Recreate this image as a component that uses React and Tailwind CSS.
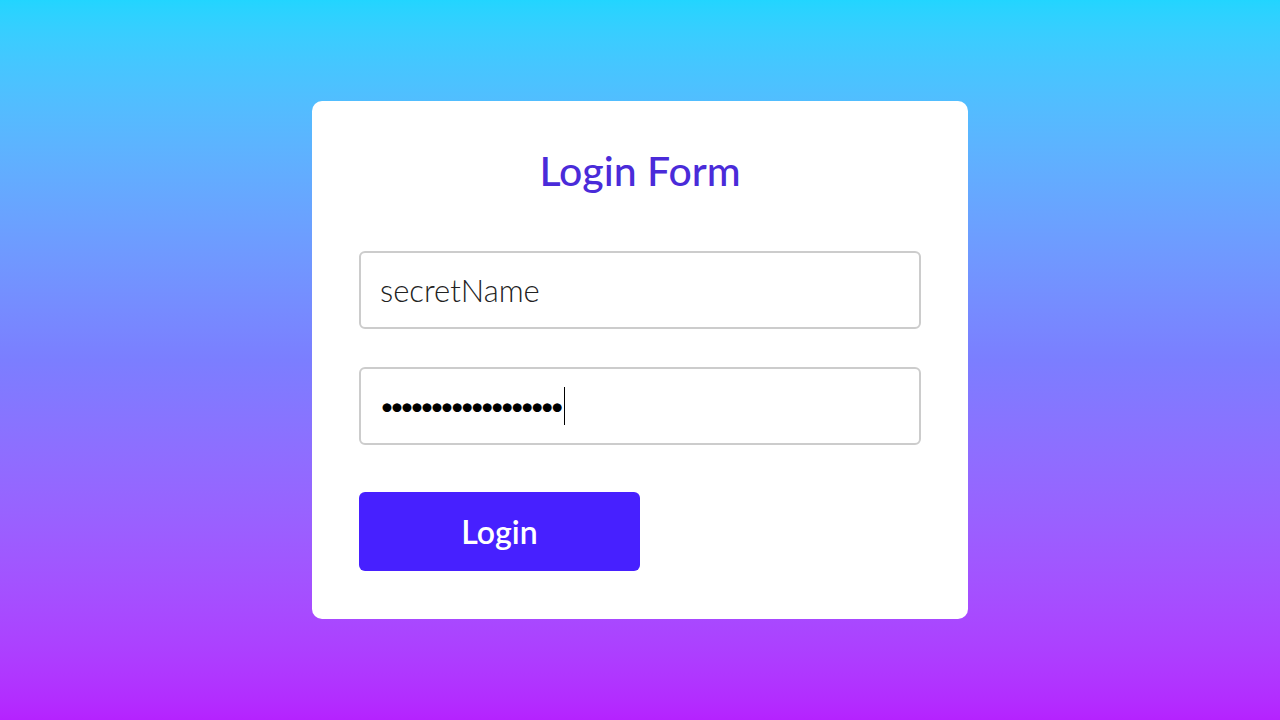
import React from 'react';

const App = () => {
  return (
    <div
      className="w-full h-[720px] flex items-center justify-center bg-gradient-to-b from-[#22d5ff] via-[#7b7eff] to-[#b522ff]"
      style={{ fontFamily: 'Lato, "Noto Sans", sans-serif' }}
    >
      <div className="w-[656px] h-[518px] bg-white rounded-[10px] px-[47px] pt-[48px] flex flex-col">
        <h1 className="text-center text-[41px] leading-[44px] text-[#4a2bd9] font-medium">Login Form</h1>

        <div className="mt-[58px] h-[78px] border-2 border-[#cccccc] rounded-[6px] flex items-center px-[19px]">
          <span className="text-[31px] text-[#222] font-light">secretName</span>
        </div>

        <div className="mt-[38px] h-[78px] border-2 border-[#cccccc] rounded-[6px] flex items-center px-[19px]">
          <span className="text-[24px] text-black tracking-[-3.9px] leading-none">••••••••••••••••••</span>
          <span className="ml-[4px] w-px h-[38px] bg-black" />
        </div>

        <button className="mt-[47px] w-[281px] h-[79px] rounded-[6px] bg-[#4720ff] text-white text-[32px] font-semibold">
          Login
        </button>
      </div>
    </div>
  );
};

export default App;
